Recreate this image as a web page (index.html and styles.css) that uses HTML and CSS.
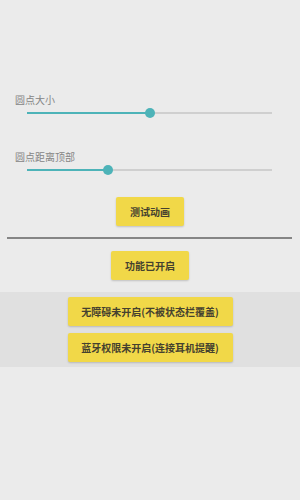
FILE: index.html
```html
<!DOCTYPE html>
<html lang="zh-CN">
<head>
    <meta charset="UTF-8">
    <meta name="viewport" content="width=device-width, initial-scale=1.0">
    <title>圆点设置</title>
    <link rel="stylesheet" href="styles.css">
</head>
<body>
    <div class="screen">
        <!-- Dot size -->
        <div class="field-label">圆点大小</div>
        <div class="slider">
            <div class="slider-fill" style="width: 50%"></div>
            <div class="slider-thumb" style="left: 50%"></div>
        </div>

        <!-- Dot distance from top -->
        <div class="field-label second">圆点距离顶部</div>
        <div class="slider">
            <div class="slider-fill" style="width: 33%"></div>
            <div class="slider-thumb" style="left: 33%"></div>
        </div>

        <div class="btn-row first">
            <button class="btn">测试动画</button>
        </div>

        <div class="divider"></div>

        <div class="btn-row status">
            <button class="btn">功能已开启</button>
        </div>

        <!-- Permission warnings -->
        <div class="warn-band">
            <button class="btn">无障碍未开启(不被状态栏覆盖)</button>
            <button class="btn">蓝牙权限未开启(连接耳机提醒)</button>
        </div>
    </div>
</body>
</html>
```

FILE: styles.css
```css
body {
    margin: 0;
    padding: 0;
    background-color: #ebebeb;
    font-family: "Noto Sans CJK SC", "Noto Sans", sans-serif;
}

.screen {
    width: 300px;
    height: 500px;
    padding-top: 94px;
    box-sizing: border-box;
}

.field-label {
    margin-left: 15px;
    font-size: 10px;
    line-height: 12px;
    color: #858585;
}

.field-label.second {
    margin-top: 31px;
}

.slider {
    position: relative;
    height: 14px;
    margin: 0 28px 0 27px;
}

.slider::before {
    content: "";
    position: absolute;
    left: 0;
    right: 0;
    top: 6px;
    height: 2px;
    background-color: #cfcfcf;
}

.slider-fill {
    position: absolute;
    left: 0;
    top: 6px;
    height: 2px;
    background-color: #4db3b8;
}

.slider-thumb {
    position: absolute;
    top: 2px;
    width: 10px;
    height: 10px;
    margin-left: -5px;
    border-radius: 50%;
    background-color: #4db3b8;
}

.btn-row {
    display: flex;
    justify-content: center;
}

.btn-row.first {
    margin-top: 20px;
}

.btn-row.status {
    margin-top: 12px;
}

.btn {
    height: 29px;
    padding: 0 14px;
    border: none;
    border-radius: 2px;
    background-color: #f1d848;
    box-shadow: 0 1px 2px rgba(0, 0, 0, 0.18);
    font-family: inherit;
    font-size: 10px;
    font-weight: 700;
    color: #45412f;
}

.divider {
    height: 2px;
    margin: 11px 8px 0 7px;
    background-color: #858585;
}

.warn-band {
    display: flex;
    flex-direction: column;
    align-items: center;
    gap: 7px;
    margin-top: 12px;
    padding: 5px 0;
    background-color: #e0e0e0;
}

.warn-band .btn {
    width: 165px;
    padding: 0;
}
```
